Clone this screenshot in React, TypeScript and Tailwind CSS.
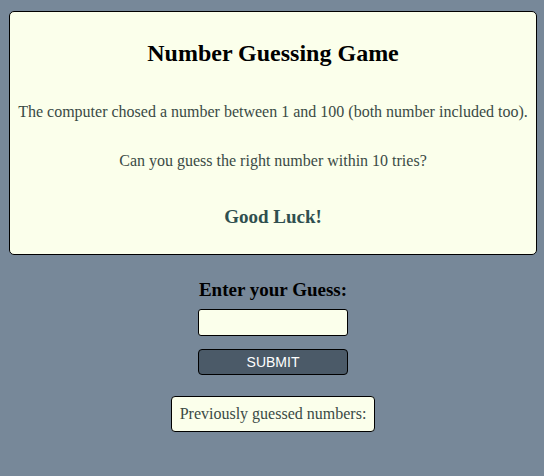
export default function App() {
  return (
    <div className="min-h-[476px] bg-[#778899] pt-[11px] pl-[9px] font-['Liberation_Serif',serif]">
      <div className="w-[528px] h-[244px] bg-[#fbffeb] border border-black rounded-[5px] flex flex-col items-center pt-[27px]">
        <h1 className="text-[24px] font-bold text-black leading-[28px]">Number Guessing Game</h1>
        <p className="mt-[36px] text-[16px] leading-[18px] text-[#3a4a45]">
          The computer chosed a number between 1 and 100 (both number included too).
        </p>
        <p className="mt-[31px] text-[16px] leading-[18px] text-[#3a4a45]">
          Can you guess the right number within 10 tries?
        </p>
        <h3 className="mt-[36px] text-[19px] leading-[22px] font-bold text-[#2f4f4f]">Good Luck!</h3>
      </div>
      <div className="w-[528px] flex flex-col items-center">
        <h2 className="mt-[24px] text-[19px] leading-[22px] font-bold text-black">Enter your Guess:</h2>
        <input
          type="text"
          className="mt-[8px] w-[150px] h-[27px] bg-[#fbffeb] border border-black rounded-[3px] outline-none"
        />
        <button className="mt-[13px] w-[150px] h-[26px] bg-[#4b5a68] border border-black rounded-[4px] text-white text-[14px] font-['Liberation_Sans',sans-serif]">
          SUBMIT
        </button>
        <div className="mt-[21px] h-[36px] px-[8px] bg-[#fbffeb] border border-black rounded-[4px] flex items-center text-[16px] text-[#3a4a45]">
          Previously guessed numbers:
        </div>
      </div>
    </div>
  );
}
